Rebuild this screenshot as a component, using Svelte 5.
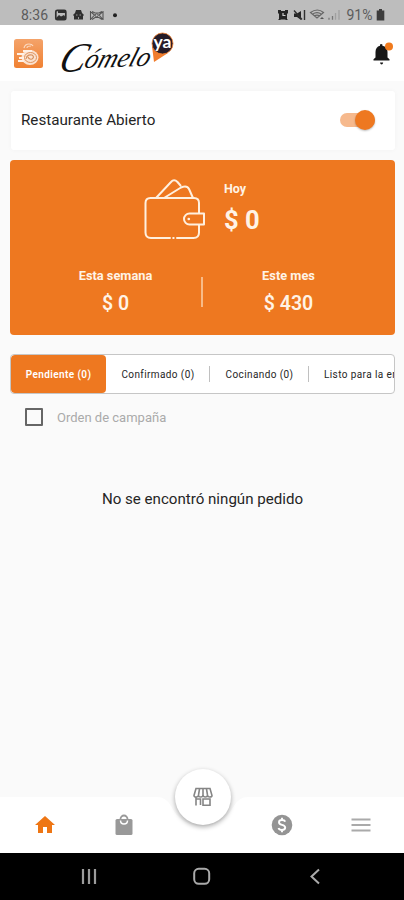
<script lang="ts">
  let open = $state(true);
  let campaign = $state(false);
  let activeTab = $state(0);

  const tabs = [
    { label: "Pendiente (0)", width: 95 },
    { label: "Confirmado (0)", width: 104 },
    { label: "Cocinando (0)", width: 99 },
    { label: "Listo para la entrega (0)", width: 150 },
  ];
</script>

<div class="screen">
  <div class="status">
    <span class="clock">8:36</span>
    <svg class="status-left" width="66" height="16" viewBox="0 0 66 16" aria-hidden="true">
      <rect x="1.800" y="3.300" width="10" height="9.400" rx="1.500" fill="none" stroke="#303030" stroke-width="1.700" />
      <path d="M2 11l3-3 2 1.500L10 8l2 3v1H2z" fill="#303030" />
      <path d="M4 4h7v2H4z" fill="#303030" />
      <path d="M20 12.500V9l-1-1 2-2 1-3h5l1 3 2 2-1 1v3.500z" fill="#303030" />
      <path d="M22 8h1.500M25.500 8H27M24.500 10v2" stroke="#999" />
      <path d="M36.500 4v9M49 4v9M36.500 4.500l4 3.500-4 4.500M49 4.500L45 8l4 4.500M38 4.500l3 1.500h4l3-1.500M38 12.500l3-2h4l3 2" fill="none" stroke="#555" stroke-width="1.100" />
      <circle cx="42.700" cy="8.300" r="1.500" fill="none" stroke="#555" />
      <circle cx="61" cy="8.300" r="2" fill="#222" />
    </svg>
    <svg class="status-right" width="66" height="16" viewBox="0 0 66 16" aria-hidden="true">
      <path d="M1 3h3v1h4V3h3v3l-1 1v5l1 1H9l-1-.5H4l-1 .5H1l1-1V7L1 6z" fill="#252525" />
      <path d="M6 6v2.500H8.500" fill="none" stroke="#ccc" stroke-width="1.200" />
      <path d="M17 6.500h3L24 4v9l-4-3h-3z" fill="#252525" />
      <path d="M17 3.500l8 9M27.500 3v10" stroke="#303030" stroke-width="1.400" />
      <path d="M33.500 5.500q7-5 13 0L40 11zM35.500 7.200q4.500-3 9 0M37.500 8.800q2.500-1.500 5 0" fill="none" stroke="#666" stroke-width="1.200" />
      <path d="M43 12l2-2 2 2z" fill="#555" />
      <path d="M52 12.800v-2M55.500 12.800V9" stroke="#777" stroke-width="1.300" />
      <path d="M58.500 12.800V6M62 12.800V3" stroke="#a0a0a0" stroke-width="1.300" />
    </svg>
    <span class="percent">91%</span>
    <svg class="battery" width="9" height="12" viewBox="0 0 9 12" aria-hidden="true">
      <path d="M3 0h3v1.500h2.300V11.500H.7V1.500H3z" fill="#3c3c3c" />
    </svg>
  </div>

  <header>
    <svg class="badge" width="29" height="29" viewBox="0 0 29 29" aria-hidden="true">
      <defs>
        <linearGradient id="badge-fill" x2="0" y2="1">
          <stop stop-color="#f4a36a" />
          <stop offset="1" stop-color="#f08132" />
        </linearGradient>
      </defs>
      <rect width="29" height="29" rx="2.500" fill="url(#badge-fill)" />
      <path d="M10 9q1-4 5-4 3 0 4 2M13 9q0-2 4-2" fill="none" stroke="#fbd9c0" stroke-width="1.200" />
      <ellipse cx="16" cy="18.500" rx="8.500" ry="7.500" fill="#fbe2cf" />
      <path d="M3 15h7M5 19h7M4 22h6M9 12h9" stroke="#fff0e5" stroke-width="2" />
      <ellipse cx="16.500" cy="18.500" rx="6" ry="5" fill="none" stroke="#e0925c" />
      <path d="M12 20q1-5 6-4 3 2 0 4-3 1-4-2" fill="none" stroke="#d8925f" stroke-width="1.200" />
    </svg>
    <svg class="logo" width="124" height="50" viewBox="0 0 124 50" role="img" aria-label="Cómelo Ya">
      <path d="M98 18l2 16 14-9z" fill="#f07d2d" />
      <circle cx="108.500" cy="15.500" r="10.500" fill="#251c28" stroke="#f07d2d" stroke-width=".8" />
      <text class="ya" x="99.500" y="20" textLength="18" lengthAdjust="spacingAndGlyphs">ya</text>
      <g transform="translate(3 44) rotate(-2) skewX(-20)">
        <text class="script cap" x="0" y="0" textLength="26" lengthAdjust="spacingAndGlyphs">C</text>
        <text class="script" x="25" y="-3" textLength="65" lengthAdjust="spacingAndGlyphs">ómelo</text>
      </g>
    </svg>
    <button class="bell" aria-label="Notificaciones">
      <svg width="24" height="28" viewBox="0 0 24 28">
        <path d="M2.500 19.500v-1.200l2-1.800V11q0-5 4.500-6.200V3.500q1.200-1.200 2.400 0v1.300Q16.500 6 16.500 11v5.500l2 1.800v1.200z" fill="#171717" />
        <path d="M9 21.500h3.200q-.3 2-1.600 2T9 21.500z" fill="#171717" />
        <circle cx="18" cy="5.500" r="4" fill="#f07a1d" />
      </svg>
    </button>
  </header>

  <main>
    <section class="state-card">
      <span>Restaurante Abierto</span>
      <button class="switch" class:on={open} role="switch" aria-checked={open} aria-label="Restaurante Abierto" onclick={() => (open = !open)}>
        <i></i>
      </button>
    </section>

    <section class="earnings">
      <div class="today">
        <svg width="62" height="62" viewBox="0 0 62 62" fill="none" stroke="#fff0df" stroke-width="2" stroke-linecap="round" stroke-linejoin="round" aria-hidden="true">
          <path d="M26 59H7q-5.500 0-5.500-5.500V24q0-5 5-5H50q5 0 5 5v10M55 46v7.500q0 5.500-5.500 5.500H33M29.200 59h.5" />
          <path d="M12 19L27 3q3-3.500 6.500 0l3 3.500M20 19L37 8.500q6-2.500 8 1.500l4 9" />
          <path d="M60 34.500H45.500a5.500 5.500 0 0 0 0 11H60z" />
          <path d="M44.700 40h.2" stroke-width="2.500" />
        </svg>
        <div class="amount large">
          <span>Hoy</span>
          <strong>$ 0</strong>
        </div>
      </div>
      <div class="totals">
        <div class="amount">
          <span>Esta semana</span>
          <strong>$ 0</strong>
        </div>
        <div class="rule"></div>
        <div class="amount">
          <span>Este mes</span>
          <strong>$ 430</strong>
        </div>
      </div>
    </section>

    <div class="tabs">
      {#each tabs as tab, i}
        <button class:active={activeTab === i} style={`width: ${tab.width}px`} onclick={() => (activeTab = i)}>{tab.label}</button>
      {/each}
    </div>

    <label class="campaign">
      <input type="checkbox" bind:checked={campaign} />
      <span>Orden de campaña</span>
    </label>

    <p class="empty">No se encontró ningún pedido</p>
  </main>

  <nav>
    <svg class="notch" width="112" height="56" viewBox="0 0 112 56" aria-hidden="true">
      <path d="M0 0h10q9 0 14 9 10 20 31 20T87 9q5-9 14-9h11z" fill="#fafafa" />
    </svg>
    <button aria-label="Inicio">
      <svg width="24" height="24" viewBox="0 0 24 24"><path d="M10 20v-6h4v6h5v-8h3L12 3 2 12h3v8z" fill="#ee7614" /></svg>
    </button>
    <button aria-label="Pedidos">
      <svg width="24" height="24" viewBox="0 0 24 24">
        <path d="M5 6h14q1.500 0 1.500 1.500v13Q20.500 22 19 22H5q-1.500 0-1.500-1.500v-13Q3.500 6 5 6z" fill="#999" />
        <path d="M8.500 6a3.500 3.500 0 0 1 7 0" fill="none" stroke="#999" stroke-width="1.800" />
        <path d="M8.500 7.500q0 3.500 3.500 3.500t3.500-3.500" fill="none" stroke="#fff" stroke-width="1.500" />
      </svg>
    </button>
    <div class="fab-slot">
      <button class="fab" aria-label="Restaurante">
        <svg width="20" height="20" viewBox="0 0 20 20" fill="none" stroke="#858585" stroke-width="1.600">
          <path d="M3 1.500h14l2 7q0 1.500-2.200 1.500t-2.300-2q0 2-2.200 2T10 8q0 2-2.300 2T5.500 8q0 2-2.300 2T1 8.500zM6.500 2l-1 6M10 2v6M13.500 2l1 6M3 10v8.500M7.500 18v-6h-5M10 12h7v6.200h-7z" />
        </svg>
      </button>
    </div>
    <button aria-label="Pagos">
      <svg width="24" height="24" viewBox="0 0 24 24">
        <circle cx="12" cy="12" r="10.300" fill="#949494" />
        <path d="M15.300 8.700Q14.500 7 12 7 9 7 9 9.200q0 1.800 3 2.600 3.200.8 3.200 2.800 0 2.400-3.200 2.400-2.800 0-3.500-2M12 4.800V7M12 17v2.200" fill="none" stroke="#fff" stroke-width="1.900" />
      </svg>
    </button>
    <button aria-label="Menú">
      <svg width="24" height="24" viewBox="0 0 24 24"><path d="M2.500 6.500h19M2.500 12h19M2.500 17.500h19" stroke="#aaa" stroke-width="2" /></svg>
    </button>
  </nav>

  <footer>
    <svg width="20" height="20" viewBox="0 0 20 20" stroke="#9b9b9b" stroke-width="2.200"><path d="M4 2v15M10 2v15M16 2v15" /></svg>
    <svg width="20" height="20" viewBox="0 0 20 20"><rect x="2.200" y="1.800" width="15" height="15" rx="4.500" fill="none" stroke="#aaa" stroke-width="2" /></svg>
    <svg width="20" height="20" viewBox="0 0 20 20"><path d="M14 2.500L6.500 9.500l7.500 7" fill="none" stroke="#aaa" stroke-width="2" /></svg>
  </footer>
</div>

<style>
  :global(body) {
    background: #fafafa;
  }

  .screen {
    display: flex;
    flex-direction: column;
    width: 404px;
    height: 900px;
    overflow: hidden;
    background: #fafafa;
    color: #252525;
    font-family: Roboto, sans-serif;
  }

  button {
    padding: 0;
    border: 0;
    background: none;
    font: inherit;
    color: inherit;
  }

  svg {
    display: block;
    flex: none;
  }

  .status {
    display: flex;
    align-items: center;
    box-sizing: border-box;
    height: 25px;
    padding: 5px 19px 0 21px;
    background: #bdbdbd;
    color: #5b5b5b;
    font-size: 14px;
  }

  .clock {
    width: 33px;
    white-space: nowrap;
  }

  .status-right {
    margin-left: auto;
  }

  .percent {
    width: 33px;
    text-align: center;
    white-space: nowrap;
  }

  header {
    display: flex;
    align-items: center;
    box-sizing: border-box;
    height: 56px;
    padding: 0 9px 0 14px;
    background: #fff;
  }

  .logo {
    margin-left: 11px;
    overflow: visible;
  }

  .script {
    fill: #111;
    font: italic 27px "Liberation Serif", serif;
  }

  .script.cap {
    font-size: 41px;
  }

  .ya {
    fill: #fff;
    font: 700 17px Lato, sans-serif;
  }

  .bell {
    padding-top: 3px;
    margin-left: auto;
  }

  main {
    display: flex;
    flex: 1;
    flex-direction: column;
    padding: 10px 9px 0 10px;
  }

  .state-card {
    display: flex;
    align-items: center;
    justify-content: space-between;
    box-sizing: border-box;
    height: 59px;
    padding: 0 20px 2px 10px;
    margin-left: 1px;
    border-radius: 3px;
    background: #fff;
    box-shadow: 0 0 5px #00000009;
    font-size: 15.200px;
  }

  .switch {
    display: flex;
    align-items: center;
    width: 35px;
    height: 14px;
    border-radius: 7px;
    background: #ccc;
  }

  .switch i {
    width: 20px;
    height: 20px;
    border-radius: 50%;
    background: #fff;
    box-shadow: 0 1px 2px #0004;
  }

  .switch.on {
    justify-content: flex-end;
    background: #f6b98d;
  }

  .switch.on i {
    background: #ee7820;
  }

  .earnings {
    display: flex;
    flex-direction: column;
    height: 175px;
    margin-top: 10px;
    border-radius: 4px;
    background: #ee7820;
    color: #fff3e6;
  }

  .today {
    display: flex;
    padding: 19px 0 0 134px;
    height: 77px;
    gap: 18px;
  }

  .amount {
    display: flex;
    flex: 1;
    flex-direction: column;
    align-items: center;
    font-size: 12.800px;
    font-weight: 700;
    line-height: 16px;
  }

  .amount strong {
    margin-top: 9px;
    font-size: 19.500px;
    font-weight: 600;
    line-height: 22px;
  }

  .amount.large {
    align-items: flex-start;
    padding-top: 2px;
  }

  .large span {
    font-size: 12.500px;
  }

  .large strong {
    margin-top: 8px;
    font-size: 25.500px;
    font-weight: 700;
    line-height: 30px;
  }

  .totals {
    display: flex;
    padding: 12px 21px 0 20px;
  }

  .rule {
    width: 2px;
    height: 30px;
    margin-top: 9px;
    background: #f8bb87;
  }

  .tabs {
    display: flex;
    box-sizing: border-box;
    height: 40px;
    margin-top: 19px;
    overflow: hidden;
    border: 1px solid #c6c6c6;
    border-radius: 4px;
    background: #fff;
  }

  .tabs button {
    position: relative;
    flex: none;
    font-size: 10px;
    letter-spacing: 0.400px;
    white-space: nowrap;
  }

  .tabs button:last-child {
    padding-left: 15px;
    text-align: left;
  }

  .tabs button:not(:first-child, :last-child)::after {
    position: absolute;
    top: 11px;
    right: 0;
    width: 1px;
    height: 16px;
    background: #c0c0c0;
    content: "";
  }

  .tabs .active {
    border-radius: 4px;
    background: #ee7820;
    color: #fff;
    font-weight: 600;
  }

  .campaign {
    display: flex;
    align-items: center;
    height: 18px;
    margin: 14px 0 0 15px;
    gap: 14px;
    color: #aaa;
    font-size: 13px;
  }

  .campaign input {
    width: 18px;
    height: 18px;
    margin: 0;
    border: 2px solid #666;
    border-radius: 1px;
    appearance: none;
  }

  .campaign input:checked {
    background: #ee7820;
  }

  .empty {
    margin: 63px 0 0;
    font-size: 15.100px;
    line-height: 20px;
    text-align: center;
  }

  nav {
    position: relative;
    display: grid;
    grid-template-columns: repeat(5, 79px);
    align-items: center;
    justify-items: center;
    height: 56px;
    padding: 0 4px 0 5px;
    background: #fff;
  }

  .notch {
    position: absolute;
    top: 0;
    left: 147px;
  }

  .fab-slot {
    width: 56px;
    height: 56px;
  }

  .fab {
    position: relative;
    top: -28px;
    display: flex;
    align-items: center;
    justify-content: center;
    width: 56px;
    height: 56px;
    border-radius: 50%;
    background: #fff;
    box-shadow: 0 2px 5px #0005;
  }

  footer {
    display: flex;
    align-items: center;
    justify-content: space-between;
    height: 47px;
    padding: 0 79px;
    background: #000;
  }
</style>
